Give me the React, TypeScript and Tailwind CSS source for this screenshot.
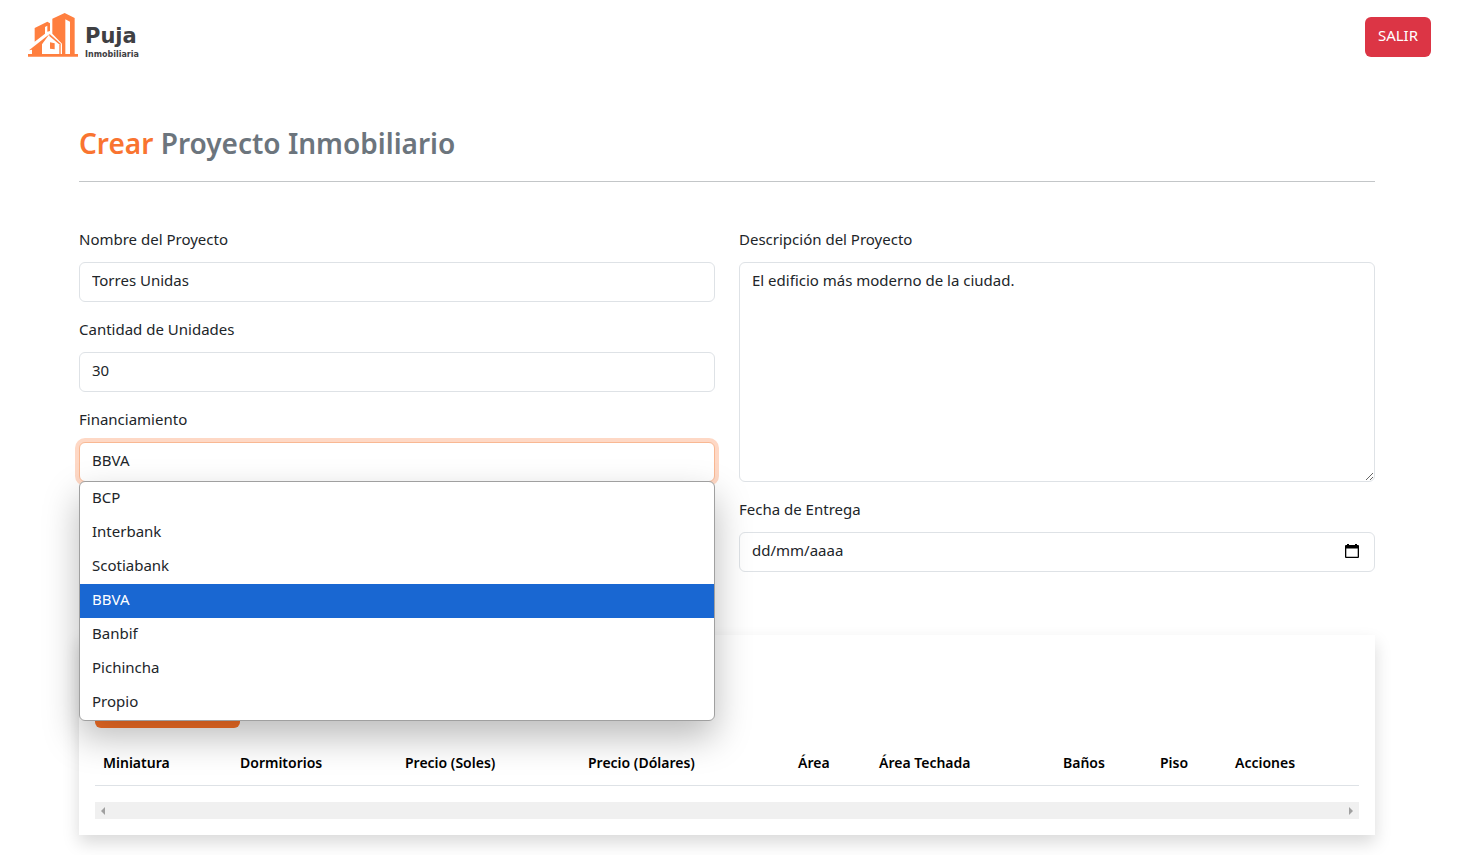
import { useState } from "react";

const banks = ["BCP", "Interbank", "Scotiabank", "BBVA", "Banbif", "Pichincha", "Propio"];

const columns = [
  { name: "Miniatura", width: "w-[137px]" },
  { name: "Dormitorios", width: "w-[165px]" },
  { name: "Precio (Soles)", width: "w-[183px]" },
  { name: "Precio (Dólares)", width: "w-[210px]" },
  { name: "Área", width: "w-[81px]" },
  { name: "Área Techada", width: "w-[184px]" },
  { name: "Baños", width: "w-[97px]" },
  { name: "Piso", width: "w-[75px]" },
  { name: "Acciones", width: "w-[132px]" },
];

const label = "block h-[26px] leading-[22px] mb-2";
const field =
  "block w-full h-10 rounded-md border border-[#dee2e6] bg-white px-3 pb-1 text-[#212529] placeholder:text-[#212529] outline-none";

function Logo() {
  return (
    <a href="#" className="flex items-start text-[#3f4043]">
      <svg viewBox="0 0 150 132" className="h-11 w-[50px]" aria-hidden="true">
        <g fill="#ff7f3f">
          <path d="M0 123H150V131H0Z" />
          <path d="M20 45L58 26L66 31V54L58 56V38L51 42V62L20 86Z" />
          <path d="M73 17L110 0L140 15V125H126V26L112 19V125H102V92L73 62Z" />
          <path d="M3 112L64 64L42 94V125H12V110Z" />
          <path d="M66 88L80 91V109L66 107Z" />
          <path d="M64 62L100 94L96 96L64 69Z" />
          <path d="M94 96H98V125H94Z" />
        </g>
      </svg>
      <span className="flex flex-col pt-2 pl-[7px] font-['DejaVu_Sans',sans-serif] font-bold">
        <span className="text-[21px] leading-[30px]">Puja</span>
        <span className="text-[8px] leading-2">Inmobiliaria</span>
      </span>
    </a>
  );
}

export default function App() {
  const [bank, setBank] = useState("BBVA");
  return (
    <div className="bg-white pr-[26px] pb-5 font-['Noto_Sans',sans-serif] text-[15px] text-[#212529]">
      <header className="flex items-start justify-between pt-[13px] pr-[23px] pl-7">
        <Logo />
        <button className="mt-1 h-10 rounded-md bg-[#dc3545] px-[13px] pb-1 text-white">SALIR</button>
      </header>

      <main className="mx-auto max-w-[1320px] px-3 pt-[62px]">
        <h1 className="border-b border-[#c3c6c8] pb-4 text-[28px] leading-[44px] font-semibold text-[#6c757d]">
          <span className="text-[#f97430]">Crear</span> Proyecto Inmobiliario
        </h1>

        <form className="mt-[46px] grid grid-cols-2 gap-x-6 gap-y-4">
          <div className="flex flex-col gap-4">
            <div>
              <label htmlFor="name" className={label}>Nombre del Proyecto</label>
              <input id="name" className={field} defaultValue="Torres Unidas" />
            </div>
            <div>
              <label htmlFor="units" className={label}>Cantidad de Unidades</label>
              <input id="units" className={field} defaultValue="30" />
            </div>
            <div className="relative">
              <label htmlFor="bank" className={label}>Financiamiento</label>
              <select
                id="bank"
                value={bank}
                onChange={(e) => setBank(e.target.value)}
                className="block h-10 w-full appearance-none rounded-md border border-[#f9b893] bg-white px-3 pb-1 text-[#212529] ring-4 ring-[#fed8c5] outline-none"
              >
                {banks.map((b) => (
                  <option key={b}>{b}</option>
                ))}
              </select>
              <ul className="absolute inset-x-0 top-full z-10 -mt-px overflow-hidden rounded-md border border-[#a0a0a0] bg-white shadow-[0_16px_36px_rgba(0,0,0,0.27)]">
                {banks.map((b) => (
                  <li key={b}>
                    <button
                      type="button"
                      onClick={() => setBank(b)}
                      className={
                        b === bank
                          ? "block h-[34px] w-full bg-[#1967d2] px-3 pb-1 text-left text-white"
                          : "block h-[34px] w-full px-3 pb-1 text-left"
                      }
                    >
                      {b}
                    </button>
                  </li>
                ))}
              </ul>
            </div>
          </div>

          <div className="flex flex-col">
            <label htmlFor="description" className={label}>Descripción del Proyecto</label>
            <textarea
              id="description"
              className="block w-full flex-1 resize-y rounded-md border border-[#dee2e6] px-3 py-[5px] leading-6 outline-none"
              defaultValue="El edificio más moderno de la ciudad."
            />
          </div>

          <div className="flex items-end">
            <input aria-label="Dirección" className={field} />
          </div>
          <div>
            <label htmlFor="delivery" className={label}>Fecha de Entrega</label>
            <div className="relative">
              <input id="delivery" className={field} placeholder="dd/mm/aaaa" />
              <button type="button" aria-label="Abrir calendario" className="absolute top-3 right-4">
                <svg viewBox="0 0 14 14" className="h-3.5 w-3.5" aria-hidden="true">
                  <path fill="#000" fillRule="evenodd" d="M2 0h2v1h6V0h2v1h1a1 1 0 0 1 1 1v11a1 1 0 0 1-1 1H1a1 1 0 0 1-1-1V2a1 1 0 0 1 1-1h1ZM1.300 4.500v8.200h11.400V4.500Z" />
                </svg>
              </button>
            </div>
          </div>
        </form>

        <section className="mt-[63px] bg-white p-4 shadow-[0_8px_16px_rgba(0,0,0,0.15)]">
          <div className="pt-[37px]">
            <button aria-label="Agregar" className="block h-10 w-[145px] rounded-md bg-[#fd7226]" />
          </div>
          <table className="mt-3 w-full table-fixed text-left text-sm text-black">
            <thead>
              <tr className="border-b border-[#dee2e6]">
                {columns.map((c) => (
                  <th key={c.name} className={`${c.width} px-2 pt-[11px] pb-2.5 leading-6 font-semibold whitespace-nowrap`}>
                    {c.name}
                  </th>
                ))}
              </tr>
            </thead>
          </table>
          <div className="mt-4 flex h-[17px] items-center justify-between bg-[#f0f0f0] px-1.5 text-[#a0a0a0]">
            <button aria-label="Desplazar a la izquierda">
              <svg viewBox="0 0 4 8" className="h-2 w-1" fill="currentColor"><path d="M4 0v8L0 4Z" /></svg>
            </button>
            <button aria-label="Desplazar a la derecha">
              <svg viewBox="0 0 4 8" className="h-2 w-1" fill="currentColor"><path d="M0 0v8l4-4Z" /></svg>
            </button>
          </div>
        </section>
      </main>
    </div>
  );
}
